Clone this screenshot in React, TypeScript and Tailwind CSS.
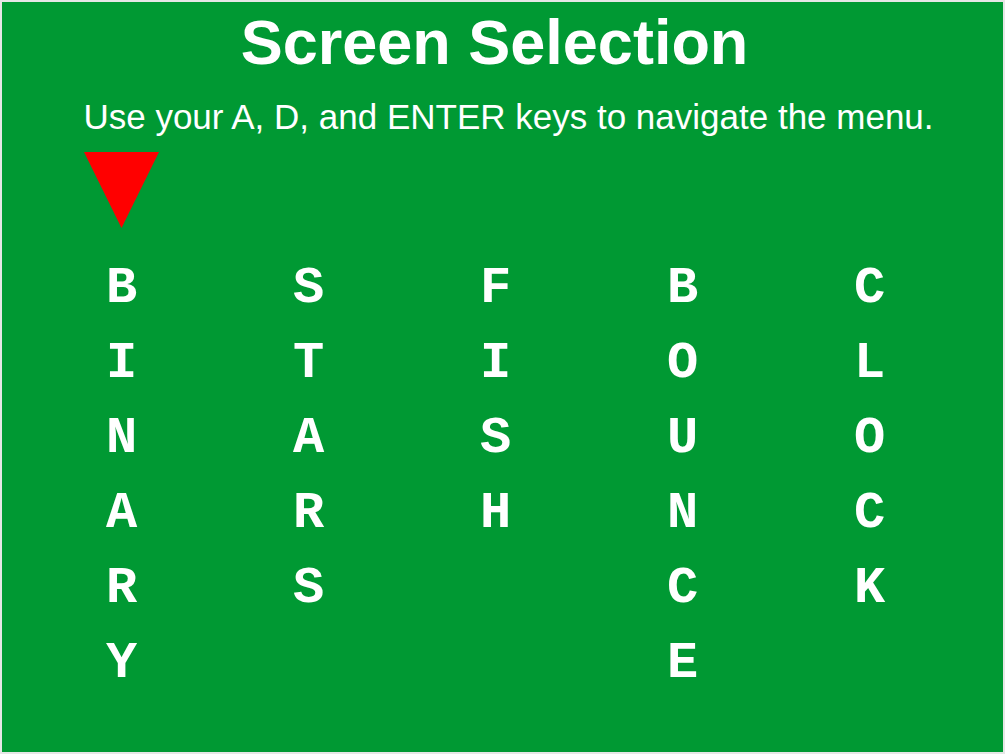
import React from 'react'

const columns = ['BINARY', 'STARS', 'FISH', 'BOUNCE', 'CLOCK']

export default function App() {
  const selected = 0

  return (
    <div className="w-[1005px] h-[754px] border-2 border-[#e6e6e6] bg-[#009933] text-white overflow-hidden">
      {/* Header */}
      <h1 className="pt-[9px] pr-[16px] text-center text-[63px] leading-[63px] font-bold font-['Liberation_Sans',Arial,sans-serif]">
        Screen Selection
      </h1>
      <p className="mt-[25px] pl-[12px] text-center text-[35px] leading-[35px] font-['Liberation_Sans',Arial,sans-serif]">
        Use your A, D, and ENTER keys to navigate the menu.
      </p>

      {/* Menu */}
      <div className="mt-[18px] pl-[26px] grid grid-cols-[repeat(5,187px)]">
        {columns.map((word, i) => (
          <div key={word} className="flex justify-center h-[76px]">
            {i === selected && (
              <svg width="75" height="76" viewBox="0 0 75 76">
                <polygon points="0,0 75,0 37.5,76" fill="#ff0000" />
              </svg>
            )}
          </div>
        ))}
      </div>

      <div className="mt-[23px] pl-[26px] grid grid-cols-[repeat(5,187px)] items-start">
        {columns.map((word) => (
          <div key={word} className="flex flex-col items-center">
            {word.split('').map((ch, j) => (
              <span
                key={j}
                className="block h-[75px] text-[52px] leading-[75px] font-bold font-['Liberation_Mono','Courier_New',monospace]"
              >
                {ch}
              </span>
            ))}
          </div>
        ))}
      </div>
    </div>
  )
}
